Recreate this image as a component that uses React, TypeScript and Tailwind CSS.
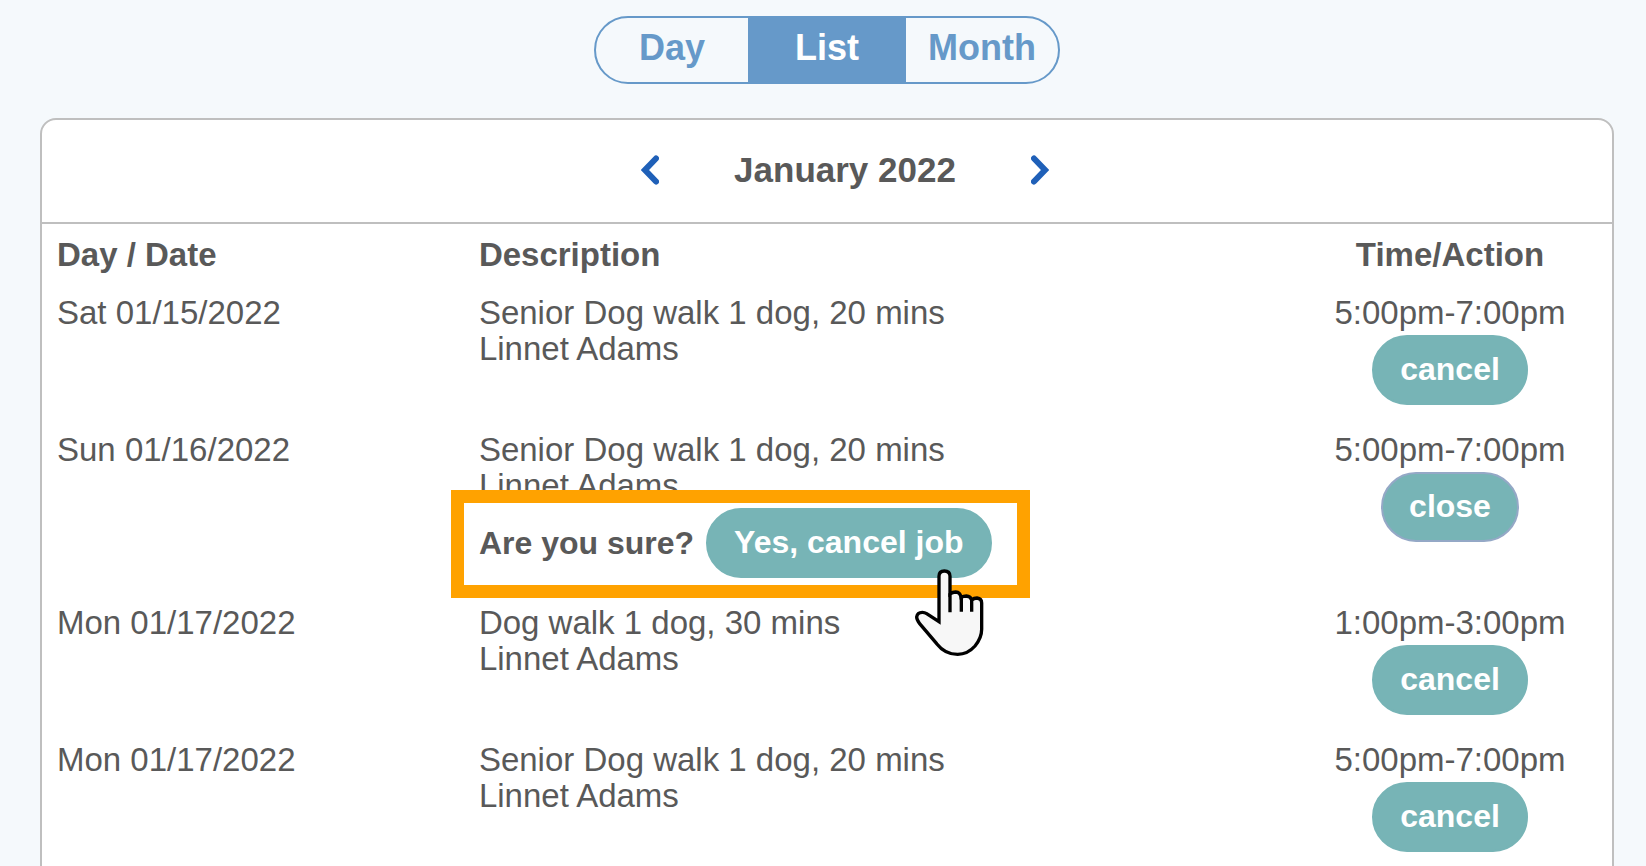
import { useState } from "react";
import clsx from "clsx";

type Job = {
  id: number;
  date: string;
  service: string;
  client: string;
  time: string;
};

const jobs: Job[] = [
  { id: 1, date: "Sat 01/15/2022", service: "Senior Dog walk 1 dog, 20 mins", client: "Linnet Adams", time: "5:00pm-7:00pm" },
  { id: 2, date: "Sun 01/16/2022", service: "Senior Dog walk 1 dog, 20 mins", client: "Linnet Adams", time: "5:00pm-7:00pm" },
  { id: 3, date: "Mon 01/17/2022", service: "Dog walk 1 dog, 30 mins", client: "Linnet Adams", time: "1:00pm-3:00pm" },
  { id: 4, date: "Mon 01/17/2022", service: "Senior Dog walk 1 dog, 20 mins", client: "Linnet Adams", time: "5:00pm-7:00pm" },
];

const views = ["Day", "List", "Month"];

const pill =
  "h-[70px] rounded-full border-2 bg-[#77b4b6] px-[26px] pb-0.5 text-[32px] leading-9 font-bold whitespace-nowrap text-white";

const HandPointer = () => (
  <svg
    className="pointer-events-none absolute top-[60px] right-[7px] h-[89px] w-[71px]"
    viewBox="72 56 213 267"
    fill="none"
    stroke="#000"
    strokeWidth="10"
    aria-hidden="true"
  >
    <path
      d="M147 217V81Q147 65 163 65Q180 65 180 81V134Q188 128 197 128Q211 129 213 144Q221 140 229 140Q242 141 245 152Q252 146 261 146Q275 148 275 161V240Q275 266 255 290Q233 315 203 315Q165 315 140 283L89 223Q80 211 80 203Q82 189 97 189Q104 189 110 193Z"
      fill="#f7f7f7"
    />
    <path d="M180 132V189M214 142V187M245 150V187" />
  </svg>
);

const ConfirmCancel = () => (
  <div className="relative mt-1 inline-flex items-center gap-3 whitespace-nowrap">
    <strong className="text-[32px] leading-9">Are you sure?</strong>
    <button type="button" className={clsx(pill, "border-[#77b4b6]")}>
      Yes, cancel job
    </button>
    <div className="pointer-events-none absolute -top-[18px] -right-[38px] -bottom-5 -left-7 border-[13px] border-[#ffa200]" />
    <HandPointer />
  </div>
);

export default function App() {
  const [view, setView] = useState("List");
  const [openJob, setOpenJob] = useState<number | null>(2);

  return (
    <div className="h-screen overflow-hidden bg-[#f5f9fc] pt-4 pr-8 pl-10 font-['Liberation_Sans',Arial,sans-serif] text-[#595959]">
      <div className="mx-auto grid h-[68px] w-[466px] grid-cols-[1fr_158px_1fr] overflow-hidden rounded-full border-2 border-[#6699c9]">
        {views.map((name) => (
          <button
            key={name}
            type="button"
            onClick={() => setView(name)}
            className={clsx(
              "pb-1 text-[36px] leading-10 font-bold",
              view === name ? "bg-[#6699c9] text-white" : "text-[#6699c9]"
            )}
          >
            {name}
          </button>
        ))}
      </div>

      <div className="mt-[34px] rounded-t-2xl border-2 border-[#bfbfbf] bg-white">
        <div className="flex h-[104px] items-center justify-center gap-[75px] border-b-2 border-[#bfbfbf] pb-[3px] pl-9">
          <button type="button" aria-label="Previous month">
            <svg className="h-[30px] w-[18px]" viewBox="0 0 18 30" fill="none" stroke="#1f60b8" strokeWidth="6" strokeLinecap="round" strokeLinejoin="miter">
              <path d="M15 3.500L4 15L15 26.500" />
            </svg>
          </button>
          <h2 className="text-[35px] leading-10 font-bold">January 2022</h2>
          <button type="button" aria-label="Next month">
            <svg className="h-[30px] w-[18px]" viewBox="0 0 18 30" fill="none" stroke="#1f60b8" strokeWidth="6" strokeLinecap="round" strokeLinejoin="miter">
              <path d="M3 3.500L14 15L3 26.500" />
            </svg>
          </button>
        </div>

        <table className="w-full table-fixed text-[33px] leading-9">
          <thead>
            <tr className="text-left">
              <th className="w-[27%] px-[15px] pt-[13px] pb-[22px]">Day / Date</th>
              <th className="px-[13px] pt-[13px] pb-[22px]">Description</th>
              <th className="w-[324px] pt-[13px] pb-[22px] text-center">Time/Action</th>
            </tr>
          </thead>
          <tbody>
            {jobs.map((job) => {
              const open = openJob === job.id;
              return (
                <tr key={job.id} className="align-top">
                  <td className="px-[15px] pb-[27px]">{job.date}</td>
                  <td className="px-[13px] pb-[27px]">
                    <p>{job.service}</p>
                    <p>{job.client}</p>
                    {open && <ConfirmCancel />}
                  </td>
                  <td className="pb-[27px] text-center">
                    <p>{job.time}</p>
                    <button
                      type="button"
                      onClick={() => setOpenJob(open ? null : job.id)}
                      className={clsx(pill, "mx-auto mt-1 block", open ? "border-[#94a8c6]" : "border-[#77b4b6]")}
                    >
                      {open ? "close" : "cancel"}
                    </button>
                  </td>
                </tr>
              );
            })}
          </tbody>
        </table>
      </div>
    </div>
  );
}
